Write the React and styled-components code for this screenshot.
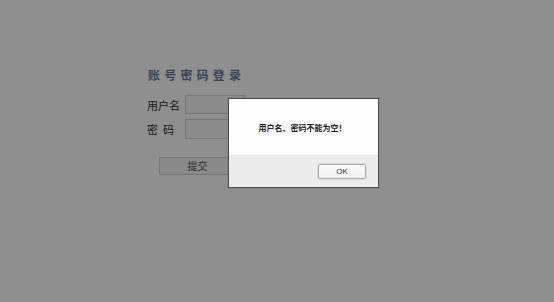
import React from "react";
import styled, { createGlobalStyle } from "styled-components";

const Global = createGlobalStyle`
  html, body { margin: 0; padding: 0; background: #ffffff; }
  body {
    width: 554px; height: 302px; overflow: hidden;
    font-family: "Noto Sans CJK SC", "Liberation Sans", sans-serif;
  }
`;

const Page = styled.div`
  position: relative;
  width: 554px;
  height: 302px;
  background: #ffffff;
`;

const LoginForm = styled.form`
  display: flex;
  flex-direction: column;
  padding: 67px 0 0 147px;
`;

const Title = styled.h2`
  margin: 0 0 12px 1px;
  font-size: 12px;
  line-height: 16px;
  font-weight: bold;
  letter-spacing: 4.2px;
  color: #6c7895;
`;

const Row = styled.div`
  display: flex;
  align-items: center;
  gap: 4px;
  margin-bottom: ${(p) => p.$mb || 0}px;
`;

const Label = styled.label`
  width: 34px;
  font-size: 11px;
  line-height: 14px;
  color: #2e2e2e;
  white-space: pre;
`;

const Input = styled.input`
  box-sizing: border-box;
  width: 60px;
  height: ${(p) => p.$h || 19}px;
  margin: 0;
  padding: 0 3px;
  border: 1px solid #d2d2d2;
  background: #fafafa;
  outline: none;
`;

const Submit = styled.button`
  box-sizing: border-box;
  align-self: flex-start;
  margin-left: 12px;
  width: 77px;
  height: 18px;
  padding: 0;
  border: 1px solid #d0d0d0;
  background: #f6f6f6;
  color: #555;
  font-family: inherit;
  font-size: 10px;
  line-height: 16px;
`;

const Mask = styled.div`
  position: absolute;
  inset: 0;
  background: rgba(0, 0, 0, 0.44);
`;

const Dialog = styled.div`
  position: absolute;
  left: 228px;
  top: 98px;
  width: 151px;
  height: 90px;
  box-sizing: border-box;
  border: 1px solid #4e4e4e;
  display: flex;
  flex-direction: column;
  background: #f0f0f0;
  box-shadow: 0 0 1px rgba(0,0,0,0.3);
`;

const Body = styled.div`
  height: 56px;
  background: #fdfdfd;
  display: flex;
  align-items: center;
  justify-content: center;
  font-size: 8px;
  font-weight: 600;
  color: #222;
  padding-right: 2px;
  padding-top: 1px;
  box-sizing: border-box;
`;

const Footer = styled.div`
  flex: 1;
  background: #ececec;
  border-top: 1px solid #e4e4e4;
  display: flex;
  align-items: center;
  justify-content: flex-end;
  padding-right: 12px;
`;

const OkButton = styled.button`
  box-sizing: border-box;
  width: 48px;
  height: 15px;
  padding: 0;
  margin-top: -1px;
  border: 1px solid #a9a9a9;
  border-radius: 2px;
  background: linear-gradient(#fbfbfb, #efefef);
  box-shadow: 0 0 0 1px #dcdcdc;
  color: #333;
  font-family: "Liberation Sans", sans-serif;
  font-size: 8px;
  line-height: 13px;
`;

export default function App() {
  return (
    <Page>
      <Global />
      <LoginForm onSubmit={(e) => e.preventDefault()}>
        <Title>账号密码登录</Title>
        <Row $mb={5}>
          <Label>用户名</Label>
          <Input $h={19} />
        </Row>
        <Row $mb={18}>
          <Label>{"密  码"}</Label>
          <Input type="password" $h={20} />
        </Row>
        <Submit type="submit">提交</Submit>
      </LoginForm>
      <Mask />
      <Dialog>
        <Body>用户名、密码不能为空！</Body>
        <Footer>
          <OkButton>OK</OkButton>
        </Footer>
      </Dialog>
    </Page>
  );
}
